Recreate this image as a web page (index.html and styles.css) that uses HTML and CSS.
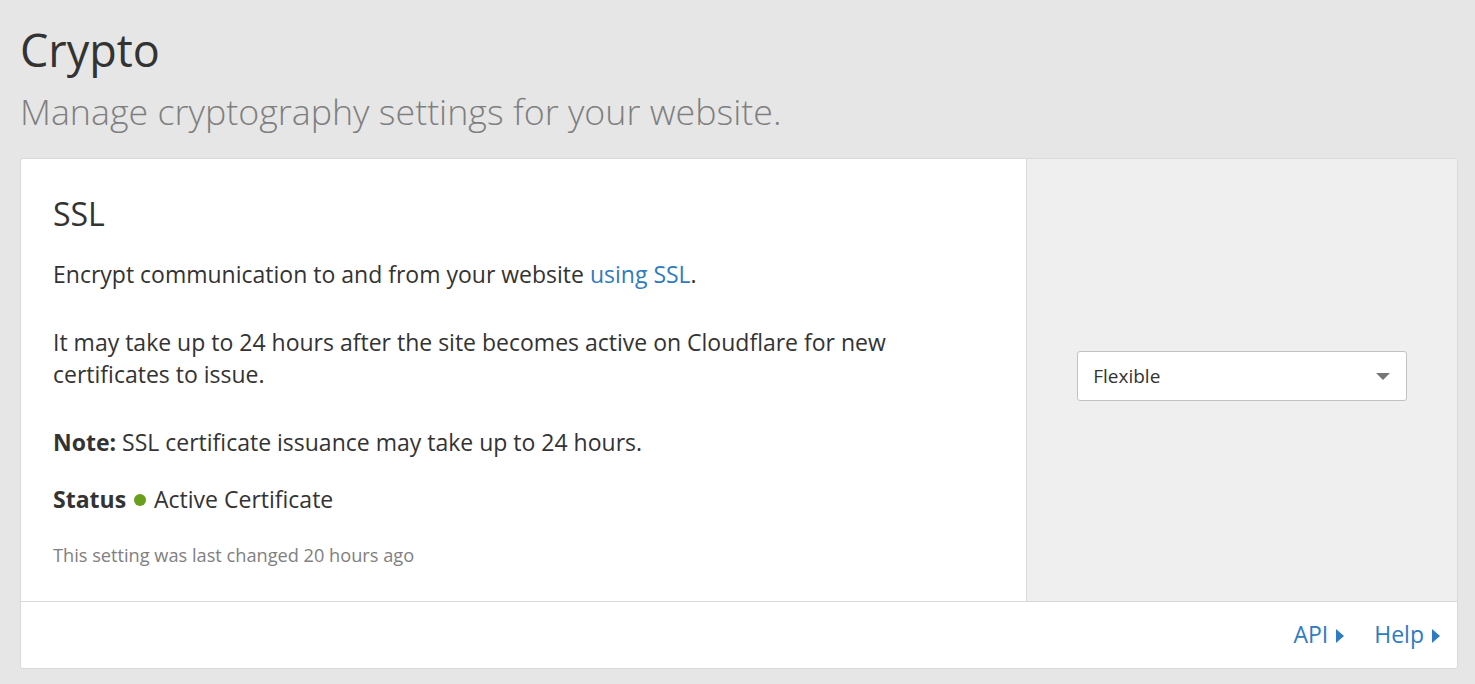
FILE: index.html
```html
<!DOCTYPE html>
<html lang="en">
<head>
<meta charset="utf-8">
<title>Crypto</title>
<link rel="stylesheet" href="styles.css">
</head>
<body>
<div class="page">
  <header class="page-header">
    <h1 class="page-title">Crypto</h1>
    <p class="page-subtitle">Manage cryptography settings for your website.</p>
  </header>
  <section class="card">
    <div class="card-body">
      <div class="card-main">
        <h2 class="card-title">SSL</h2>
        <p class="text">Encrypt communication to and from your website <a class="link" href="#">using SSL</a>.</p>
        <p class="text">It may take up to 24 hours after the site becomes active on Cloudflare for new certificates to issue.</p>
        <p class="text note"><strong>Note:</strong> SSL certificate issuance may take up to 24 hours.</p>
        <p class="text status"><strong>Status</strong> <span class="dot"></span> Active Certificate</p>
        <p class="meta">This setting was last changed 20 hours ago</p>
      </div>
      <div class="card-side">
        <div class="select">
          <span class="select-value">Flexible</span>
          <span class="caret"></span>
        </div>
      </div>
    </div>
    <footer class="card-footer">
      <a class="footer-link" href="#">API<span class="tri"></span></a>
      <a class="footer-link" href="#">Help<span class="tri"></span></a>
    </footer>
  </section>
</div>
</body>
</html>
```

FILE: styles.css
```css
html, body {
  margin: 0;
  padding: 0;
  background: #e6e6e6;
  font-family: "Open Sans", "Liberation Sans", sans-serif;
  color: #333;
}
.page {
  padding: 20px 17px 16px 20px;
}
.page-title {
  margin: 0;
  font-size: 45px;
  font-weight: 400;
  line-height: 60px;
  color: #333;
}
.page-subtitle {
  margin: 0;
  padding-top: 2px;
  font-size: 35.8px;
  font-weight: 300;
  line-height: 58px;
  color: #7f7f7f;
}
.card {
  margin-top: 18px;
  background: #fff;
  border: 1px solid #d9d9d9;
  border-radius: 3px;
}
.card-body {
  display: flex;
  border-bottom: 1px solid #d9d9d9;
}
.card-main {
  flex: 1;
  padding: 35px 32px 34px 32px;
}
.card-side {
  flex: 0 0 30%;
  background: #efefef;
  border-left: 1px solid #d9d9d9;
  display: flex;
  align-items: center;
  justify-content: center;
  padding: 0 50px 8px;
  box-sizing: border-box;
}
.card-title {
  margin: 0 0 24px;
  font-size: 32px;
  font-weight: 400;
  line-height: 40px;
  color: #333;
}
.text {
  margin: 0 0 36px;
  font-size: 23px;
  line-height: 32px;
  color: #333;
  max-width: 880px;
}
.text strong {
  font-weight: 700;
}
.note {
  margin-bottom: 25px;
}
.status {
  margin-bottom: 28px;
}
.link {
  color: #2f7bbf;
  text-decoration: none;
}
.dot {
  display: inline-block;
  width: 12px;
  height: 12px;
  border-radius: 50%;
  background: #6a9e1f;
  vertical-align: 2px;
  margin: 0 2px;
}
.meta {
  margin: 0;
  font-size: 18.2px;
  line-height: 24px;
  color: #808080;
}
.select {
  flex: 1;
  height: 50px;
  box-sizing: border-box;
  background: #fff;
  border: 1px solid #c2c2c2;
  border-radius: 3px;
  display: flex;
  align-items: center;
  justify-content: space-between;
  padding: 0 16px 0 15px;
}
.select-value {
  font-size: 19px;
  color: #333;
}
.caret {
  width: 0;
  height: 0;
  border-left: 7px solid transparent;
  border-right: 7px solid transparent;
  border-top: 7px solid #777;
}
.card-footer {
  display: flex;
  justify-content: flex-end;
  gap: 30px;
  padding: 17px 17px 18px;
}
.footer-link {
  color: #2f7bbf;
  text-decoration: none;
  font-size: 23px;
  line-height: 31px;
  display: inline-flex;
  align-items: center;
}
.tri {
  width: 0;
  height: 0;
  margin-left: 8px;
  margin-top: 2px;
  border-top: 7px solid transparent;
  border-bottom: 7px solid transparent;
  border-left: 8px solid #2f7bbf;
}
```
